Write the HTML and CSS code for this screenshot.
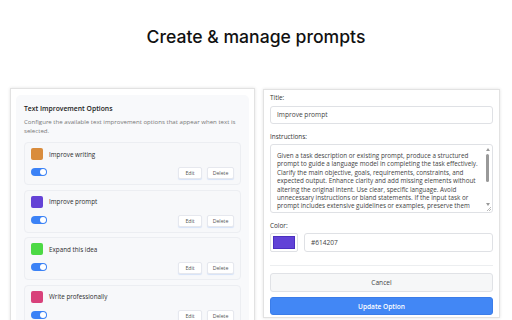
FILE: index.html
```html
<!DOCTYPE html>
<html lang="en">
<head>
  <meta charset="UTF-8">
  <title>Create &amp; manage prompts</title>
  <link rel="stylesheet" href="styles.css">
</head>
<body>
  <h1 class="page-title">Create &amp; manage prompts</h1>

  <div class="panels">
    <section class="panel panel-list">
      <div class="options">
        <h2 class="options-title">Text Improvement Options</h2>
        <p class="options-desc">Configure the available text improvement options that appear when text is selected.</p>

        <div class="option-list">
          <div class="option">
            <div class="option-head"><span class="swatch swatch-orange"></span><span class="option-name">Improve writing</span></div>
            <div class="option-foot">
              <span class="toggle"></span>
              <div class="actions"><button class="btn-small">Edit</button><button class="btn-small">Delete</button></div>
            </div>
          </div>
          <div class="option">
            <div class="option-head"><span class="swatch swatch-purple"></span><span class="option-name">Improve prompt</span></div>
            <div class="option-foot">
              <span class="toggle"></span>
              <div class="actions"><button class="btn-small">Edit</button><button class="btn-small">Delete</button></div>
            </div>
          </div>
          <div class="option">
            <div class="option-head"><span class="swatch swatch-green"></span><span class="option-name">Expand this idea</span></div>
            <div class="option-foot">
              <span class="toggle"></span>
              <div class="actions"><button class="btn-small">Edit</button><button class="btn-small">Delete</button></div>
            </div>
          </div>
          <div class="option">
            <div class="option-head"><span class="swatch swatch-pink"></span><span class="option-name">Write professionally</span></div>
            <div class="option-foot">
              <span class="toggle"></span>
              <div class="actions"><button class="btn-small">Edit</button><button class="btn-small">Delete</button></div>
            </div>
          </div>
        </div>
      </div>
    </section>

    <section class="panel panel-form">
      <label class="field-label">Title:</label>
      <div class="input">Improve prompt</div>

      <label class="field-label label-gap">Instructions:</label>
      <div class="textarea">
        <div class="textarea-text">Given a task description or existing prompt, produce a structured prompt to guide a language model in completing the task effectively. Clarify the main objective, goals, requirements, constraints, and expected output. Enhance clarity and add missing elements without altering the original intent. Use clear, specific language. Avoid unnecessary instructions or bland statements. If the input task or prompt includes extensive guidelines or examples, preserve them</div>
        <div class="scrollbar">
          <span class="arrow-up"></span>
          <span class="thumb"></span>
          <span class="arrow-down"></span>
          <span class="grip"></span>
        </div>
      </div>

      <label class="field-label label-gap">Color:</label>
      <div class="color-row">
        <span class="color-box"><span class="color-fill"></span></span>
        <div class="input input-hex">#614207</div>
      </div>

      <hr class="divider">

      <button class="btn btn-cancel">Cancel</button>
      <button class="btn btn-primary">Update Option</button>
    </section>
  </div>
</body>
</html>
```

FILE: styles.css
```css
html, body {
  margin: 0;
  padding: 0;
  height: 100%;
  overflow: hidden;
}

body {
  background: #fff;
  font-family: 'Open Sans', 'Liberation Sans', sans-serif;
  color: #2b2b2b;
  padding: 0 10px;
  box-sizing: border-box;
}

.page-title {
  font-family: 'Inter', 'Liberation Sans', sans-serif;
  font-size: 17.6px;
  font-weight: 500;
  line-height: 24px;
  color: #111;
  text-align: center;
  margin: 25px 0 39px;
}

.panels {
  display: flex;
  gap: 8px;
  align-items: flex-start;
}

.panel {
  background: #fff;
  border: 1px solid #e2e2e2;
  box-shadow: 0 0 3px rgba(0, 0, 0, 0.12);
  box-sizing: border-box;
}

/* left: list of options */
.panel-list {
  width: 245px;
  padding: 6px 5px;
  height: 300px;
}

.options {
  background: #f8f9fb;
  border-radius: 5px;
  padding: 8px;
}

.options-title {
  font-size: 6.8px;
  font-weight: 600;
  line-height: 12px;
  margin: 0;
  color: #222;
}

.options-desc {
  font-size: 6.1px;
  line-height: 9px;
  color: #777;
  margin: 2px 0 7px;
}

.option-list {
  display: flex;
  flex-direction: column;
  gap: 4.5px;
}

.option {
  background: #f7f8fa;
  border: 1px solid #eceef2;
  border-radius: 4px;
  padding: 5px 6px;
}

.option-head {
  display: flex;
  align-items: center;
  gap: 6px;
  height: 12px;
}

.swatch {
  width: 12px;
  height: 12px;
  border-radius: 2px;
}

.swatch-orange { background: #d98c3c; }
.swatch-purple { background: #6442d6; }
.swatch-green { background: #4cd944; }
.swatch-pink { background: #d8417a; }

.option-name {
  font-size: 6.3px;
  color: #2e2e2e;
}

.option-foot {
  display: flex;
  align-items: center;
  justify-content: space-between;
  margin-top: 7px;
  height: 12px;
}

.toggle {
  position: relative;
  width: 16px;
  height: 8px;
  border-radius: 4px;
  background: #3b82f6;
  margin-top: -2px;
}

.toggle::after {
  content: '';
  position: absolute;
  right: 1px;
  top: 1px;
  width: 6px;
  height: 6px;
  border-radius: 50%;
  background: #fff;
}

.actions {
  display: flex;
  gap: 5px;
}

.btn-small {
  font-family: inherit;
  font-size: 5.2px;
  color: #555;
  background: #fff;
  border: 1px solid #e6e8ee;
  border-radius: 2px;
  box-shadow: 0 1px 1px rgba(59, 130, 246, 0.18);
  height: 12px;
  padding: 0;
  width: 24px;
}

.btn-small + .btn-small { width: 27px; }

/* right: edit form */
.panel-form {
  width: 237px;
  margin-top: 1px;
  padding: 3px 6px 2px;
  display: flex;
  flex-direction: column;
}

.field-label {
  font-size: 6.4px;
  line-height: 9px;
  color: #333;
  margin-bottom: 4px;
}

.label-gap {
  margin-top: 8px;
  margin-bottom: 3px;
}

.input {
  height: 18px;
  border: 1px solid #dfe1e5;
  border-radius: 3px;
  box-sizing: border-box;
  padding: 0 6px;
  font-size: 6.6px;
  line-height: 16px;
  color: #444;
}

.textarea {
  height: 69px;
  border: 1px solid #dfe1e5;
  border-radius: 3px;
  box-sizing: border-box;
  display: flex;
  overflow: hidden;
}

.textarea-text {
  flex: 1;
  padding: 7px 0 0 6px;
  font-size: 6.3px;
  line-height: 8.4px;
  color: #444;
}

.scrollbar {
  position: relative;
  width: 9px;
  display: flex;
  flex-direction: column;
  align-items: center;
}

.arrow-up, .arrow-down {
  width: 0;
  height: 0;
  border-left: 2px solid transparent;
  border-right: 2px solid transparent;
}

.arrow-up {
  border-bottom: 3px solid #999;
  margin-top: 3px;
}

.arrow-down {
  border-top: 3px solid #999;
  margin-top: auto;
  margin-bottom: 6px;
}

.thumb {
  width: 3px;
  height: 28px;
  background: #999;
  border-radius: 2px;
  margin-top: 3px;
}

.grip {
  position: absolute;
  right: 1px;
  bottom: 1px;
  width: 4px;
  height: 4px;
  background: linear-gradient(135deg, transparent 50%, #bbb 50%, #bbb 60%, transparent 60%, transparent 75%, #bbb 75%, #bbb 85%, transparent 85%);
}

.color-row {
  display: flex;
  gap: 6px;
}

.color-box {
  width: 28px;
  height: 19px;
  border: 1px solid #dfe1e5;
  border-radius: 2px;
  box-sizing: border-box;
  padding: 2px;
}

.color-fill {
  display: block;
  height: 100%;
  background: #6142d7;
  border: 1px solid #4a2fc0;
  box-sizing: border-box;
}

.input-hex {
  flex: 1;
  height: 19px;
  line-height: 17px;
}

.divider {
  border: 0;
  border-top: 1px solid #eceef0;
  margin: 13px 0 7px;
  width: 100%;
}

.btn {
  font-family: inherit;
  font-size: 6.6px;
  border-radius: 3px;
  box-sizing: border-box;
  width: 100%;
  padding: 0;
}

.btn-cancel {
  height: 19px;
  background: #f6f7f8;
  border: 1px solid #e0e2e6;
  color: #444;
}

.btn-primary {
  height: 18px;
  margin-top: 5px;
  background: #4287f5;
  border: 1px solid #3b7de9;
  color: #fff;
  font-weight: 600;
}
```
